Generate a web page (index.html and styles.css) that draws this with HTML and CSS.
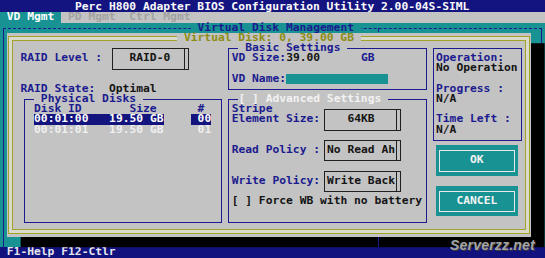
FILE: index.html
```html
<!DOCTYPE html>
<html lang="en">
<head>
    <meta charset="UTF-8">
    <meta name="viewport" content="width=device-width, initial-scale=1.0">
    <title>Perc H800 Adapter BIOS Configuration Utility</title>

    <link rel="stylesheet" href="styles.css">
</head>
<body>
    <div class="screen">
        <div class="titlebar">Perc H800 Adapter BIOS Configuration Utility 2.00-04S-SIML</div>

        <div class="tabs">
            <span class="tab active">VD Mgmt</span>
            <span class="tab">PD Mgmt</span>
            <span class="tab">Ctrl Mgmt</span>
        </div>

        <div class="window">
            <div class="window-title"> Virtual Disk Management </div>
            <div class="tick tick-top"></div>

            <div class="dialog">
                <div class="dialog-title"> Virtual Disk: 0, 39.00 GB </div>

                <div class="lbl raid-level">RAID Level :</div>
                <div class="pick raid-pick">RAID-0</div>
                <div class="lbl raid-state">RAID State:</div>
                <div class="val raid-state-val">Optimal</div>

                <!-- basic settings -->
                <div class="box basic">
                    <div class="box-title lbl"> Basic Settings </div>
                    <div class="lbl vd-size">VD Size:</div>
                    <div class="val vd-size-val">39.00</div>
                    <div class="lbl vd-size-unit">GB</div>
                    <div class="lbl vd-name">VD Name:</div>
                    <div class="vd-name-field"></div>
                </div>

                <!-- operation status -->
                <div class="box status">
                    <div class="lbl">Operation:</div>
                    <div class="val">No Operation</div>
                    <div class="lbl gap">Progress :</div>
                    <div class="val">N/A</div>
                    <div class="lbl gap">Time Left :</div>
                    <div class="val">N/A</div>
                </div>

                <!-- physical disks -->
                <div class="box disks">
                    <div class="box-title lbl"> Physical Disks </div>
                    <div class="lbl h-id">Disk ID</div>
                    <div class="lbl h-size">Size</div>
                    <div class="lbl h-num">#</div>

                    <div class="disk sel row-1">
                        <div class="disk-main"><span>00:01:00</span><span>19.50 GB</span></div>
                        <div class="disk-num">00</div>
                    </div>
                    <div class="disk row-2">
                        <div class="disk-main"><span>00:01:01</span><span>19.50 GB</span></div>
                        <div class="disk-num">01</div>
                    </div>
                </div>

                <!-- advanced settings -->
                <div class="box advanced">
                    <div class="box-title light">[ ] Advanced Settings </div>
                    <div class="lbl stripe">Stripe</div>
                    <div class="lbl elem-size">Element Size:</div>
                    <div class="pick pick-stripe">64KB</div>
                    <div class="lbl read-policy">Read Policy :</div>
                    <div class="pick pick-read">No Read Ah</div>
                    <div class="lbl write-policy">Write Policy:</div>
                    <div class="pick pick-write">Write Back</div>
                    <div class="val force-wb">[ ] Force WB with no battery</div>
                </div>

                <div class="btn btn-ok">OK</div>
                <div class="btn btn-cancel">CANCEL</div>
            </div>

            <div class="tick tick-bottom"></div>
        </div>

        <div class="statusbar">F1-Help F12-Ctlr</div>

        <div class="watermark">Serverzz.net</div>
    </div>
</body>
</html>
```

FILE: styles.css
```css
* {
    margin: 0;
    padding: 0;
    box-sizing: border-box;
}

body {
    background-color: #000;
}

/* 80x25 text screen */
.screen {
    --cw: 6.8125px;
    --ch: 10.21px;
    --navy: #1b1b8f;
    --teal: #189292;
    --gray: #c3c3c3;
    --olive: #a3a32a;

    width: 545px;
    height: 258px;
    display: grid;
    grid-template-columns: repeat(80, var(--cw));
    grid-template-rows: calc(var(--ch) + 2.2px) repeat(23, var(--ch)) 1fr;
    font-family: "DejaVu Sans Mono", "Liberation Mono", monospace;
    font-weight: bold;
    font-size: 11.315px;
    line-height: var(--ch);
    position: relative;
    overflow: hidden;
}

.lbl {
    color: var(--navy);
}

.val {
    color: #141414;
}

.light {
    color: #f2f2f2;
}

.titlebar {
    grid-row: 1;
    grid-column: 1 / -1;
    background-color: #141480;
    color: #fafafa;
    padding: 2.2px 0 0 calc(var(--cw) * 11);
}

.tabs {
    grid-row: 2;
    grid-column: 1 / -1;
    display: flex;
    background-color: var(--gray);
}

.tabs .tab {
    padding: 0 var(--cw);
    color: #a2a2a2;
}

.tabs .active {
    background-color: var(--teal);
    color: #fff;
}

/* teal window behind the dialog */
.window {
    grid-row: 3 / 25;
    grid-column: 1 / -1;
    display: grid;
    grid-template-columns: repeat(80, var(--cw));
    grid-template-rows: repeat(22, var(--ch));
    background-color: var(--teal);
    position: relative;
}

.window::before {
    content: "";
    position: absolute;
    top: calc(var(--ch) / 2);
    left: calc(var(--cw) / 2);
    right: calc(var(--cw) / 2);
    bottom: 0;
    border: 1px solid var(--navy);
    border-top-style: dashed;
    border-bottom: 0;
}

.window-title {
    grid-row: 1;
    grid-column: 29 / 54;
    white-space: pre;
    color: var(--navy);
    background-color: var(--teal);
    position: relative;
}

/* little joints left on the outer frame */
.tick {
    grid-column: 56;
    position: relative;
    background: linear-gradient(var(--navy), var(--navy)) center / 1px 100% no-repeat;
}

.tick-top {
    grid-row: 1;
    margin-top: calc(var(--ch) / 2);
    height: 4px;
}

.tick-bottom {
    grid-row: 22;
}

.dialog {
    grid-row: 2 / 22;
    grid-column: 2 / 79;
    display: grid;
    grid-template-columns: repeat(77, var(--cw));
    grid-template-rows: repeat(20, var(--ch));
    background-color: var(--gray);
    box-shadow: calc(var(--cw) * 2) var(--ch) 0 #000;
    position: relative;
}

.dialog::before {
    content: "";
    position: absolute;
    top: calc(var(--ch) / 2 - 2px);
    bottom: calc(var(--ch) / 2 - 2px);
    left: calc(var(--cw) / 2 - 2px);
    right: calc(var(--cw) / 2 - 2px);
    border: 1px solid var(--olive);
    box-shadow: inset 0 0 0 3px #d9d9cc, inset 0 0 0 4px var(--olive);
}

.dialog-title {
    grid-row: 1;
    grid-column: 26 / 53;
    white-space: pre;
    color: #8d8d14;
    background-color: var(--gray);
    position: relative;
}

.raid-level {
    grid-row: 3;
    grid-column: 3 / 15;
}

.raid-pick {
    grid-row: 2 / 5;
    grid-column: 16 / 28;
}

.raid-state {
    grid-row: 6;
    grid-column: 3 / 14;
}

.raid-state-val {
    grid-row: 6;
    grid-column: 16 / 23;
}

/* single line boxes */
.box {
    position: relative;
    display: grid;
    grid-template-columns: repeat(30, var(--cw));
    grid-auto-rows: var(--ch);
}

.box::before {
    content: "";
    position: absolute;
    top: calc(var(--ch) / 2);
    bottom: calc(var(--ch) / 2 - 1px);
    left: calc(var(--cw) / 2);
    right: calc(var(--cw) / 2 - 1px);
    border: 1px solid var(--navy);
}

.box .box-title {
    grid-row: 1;
    grid-column: 3 / 19;
    white-space: pre;
    background-color: var(--gray);
    position: relative;
}

.basic {
    grid-row: 2 / 7;
    grid-column: 33 / 63;
}

.basic .vd-size {
    grid-row: 2;
    grid-column: 2 / 10;
}

.basic .vd-size-val {
    grid-row: 2;
    grid-column: 10 / 15;
}

.basic .vd-size-unit {
    grid-row: 2;
    grid-column: 21 / 23;
}

.basic .vd-name {
    grid-row: 4;
    grid-column: 2 / 10;
}

.basic .vd-name-field {
    grid-row: 4;
    grid-column: 10 / 25;
    background-color: var(--teal);
}

.status {
    grid-row: 2 / 12;
    grid-column: 63 / 77;
    display: block;
    padding: var(--ch) var(--cw);
}

.status .gap {
    margin-top: var(--ch);
}

.disks {
    grid-row: 7 / 20;
    grid-column: 3 / 33;
}

.disks .h-id {
    grid-row: 2;
    grid-column: 3 / 10;
}

.disks .h-size {
    grid-row: 2;
    grid-column: 17 / 21;
}

.disks .h-num {
    grid-row: 2;
    grid-column: 27 / 28;
}

.disk {
    grid-column: 3 / 29;
    display: grid;
    grid-template-columns: calc(var(--cw) * 19) calc(var(--cw) * 4) calc(var(--cw) * 3);
    color: #efefef;
}

.disk.row-1 {
    grid-row: 3;
}

.disk.row-2 {
    grid-row: 4;
}

.disk .disk-main {
    display: flex;
    justify-content: space-between;
}

.disk .disk-num {
    grid-column: 3;
    text-align: right;
}

.disk.sel .disk-main,
.disk.sel .disk-num {
    background-color: #14147e;
    color: #fff;
}

.advanced {
    grid-row: 7 / 20;
    grid-column: 33 / 63;
}

.advanced .box-title {
    grid-column: 3 / 25;
}

.advanced .stripe {
    grid-row: 2;
    grid-column: 2 / 8;
}

.advanced .elem-size {
    grid-row: 3;
    grid-column: 2 / 15;
}

.advanced .pick-stripe {
    grid-row: 2 / 5;
    grid-column: 15 / 27;
}

.advanced .read-policy {
    grid-row: 6;
    grid-column: 2 / 15;
}

.advanced .pick-read {
    grid-row: 5 / 8;
    grid-column: 15 / 27;
}

.advanced .write-policy {
    grid-row: 9;
    grid-column: 2 / 15;
}

.advanced .pick-write {
    grid-row: 8 / 11;
    grid-column: 15 / 27;
}

.advanced .force-wb {
    grid-row: 11;
    grid-column: 2 / 30;
}

/* selection fields with a double right edge */
.pick {
    display: flex;
    align-items: center;
    justify-content: center;
    color: #141414;
    position: relative;
}

.pick::before {
    content: "";
    position: absolute;
    top: calc(var(--ch) / 2);
    bottom: calc(var(--ch) / 2 - 1px);
    left: calc(var(--cw) / 2);
    right: calc(var(--cw) / 2 - 2px);
    border: 1px solid #202020;
    box-shadow: inset -3px 0 0 var(--gray), inset -4px 0 0 #202020;
}

.btn {
    display: flex;
    align-items: center;
    justify-content: center;
    background-color: var(--teal);
    color: #f4f4f4;
    position: relative;
}

.btn::before {
    content: "";
    position: absolute;
    top: calc(var(--ch) / 2);
    bottom: calc(var(--ch) / 2 - 1px);
    left: calc(var(--cw) / 2);
    right: calc(var(--cw) / 2 - 1px);
    border: 1px solid #e8e8e8;
}

.btn-ok {
    grid-row: 12 / 15;
    grid-column: 64 / 76;
}

.btn-cancel {
    grid-row: 16 / 19;
    grid-column: 64 / 76;
}

.statusbar {
    grid-row: 25;
    grid-column: 1 / -1;
    background-color: #12127e;
    color: #e6e6ee;
    padding-left: var(--cw);
}

/* site watermark over the corner */
.watermark {
    position: absolute;
    left: 450px;
    top: 237px;
    font-family: "Liberation Sans", sans-serif;
    font-style: italic;
    font-weight: bold;
    font-size: 14px;
    line-height: 16px;
    letter-spacing: 0.2px;
    color: #a4a4a4;
    text-shadow: 1px 1px 0 #3a3a3a;
}
```
